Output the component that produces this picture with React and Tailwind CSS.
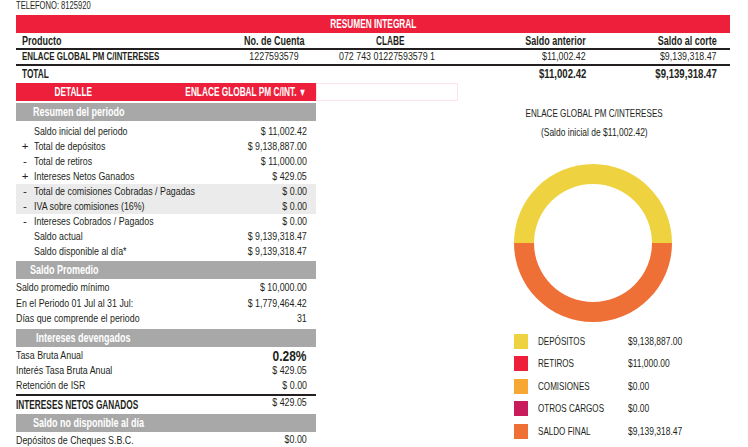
import React from "react";

// Narrow text: the statement uses a condensed face, squeeze the glyphs horizontally
const T = ({ children, o = "l", v = "n", className = "" }) => {
  const origin = o === "r" ? "origin-right" : o === "c" ? "origin-center" : "origin-left";
  const sx =
    v === "b" ? "scale-x-[0.75]" : v === "c" ? "scale-x-[0.69]" : v === "d" ? "scale-x-[0.8]" : "scale-x-[0.77]";
  return (
    <span className={`inline-block whitespace-nowrap ${sx} ${origin} ${className}`}>{children}</span>
  );
};

const resumen = [
  { sign: "", label: "Saldo inicial del periodo", value: "$ 11,002.42" },
  { sign: "+", label: "Total de depósitos", value: "$ 9,138,887.00" },
  { sign: "-", label: "Total de retiros", value: "$ 11,000.00" },
  { sign: "+", label: "Intereses Netos Ganados", value: "$ 429.05" },
  { sign: "-", label: "Total de comisiones Cobradas / Pagadas", value: "$ 0.00", shade: true },
  { sign: "-", label: "IVA sobre comisiones (16%)", value: "$ 0.00", shade: true },
  { sign: "-", label: "Intereses Cobrados / Pagados", value: "$ 0.00" },
  { sign: "", label: "Saldo actual", value: "$ 9,139,318.47" },
  { sign: "", label: "Saldo disponible al día*", value: "$ 9,139,318.47" },
];

const legend = [
  { color: "bg-[#efd240]", label: "DEPÓSITOS", value: "$9,138,887.00" },
  { color: "bg-[#ee1f3b]", label: "RETIROS", value: "$11,000.00" },
  { color: "bg-[#f7a833]", label: "COMISIONES", value: "$0.00" },
  { color: "bg-[#c81c5c]", label: "OTROS CARGOS", value: "$0.00" },
  { color: "bg-[#ef7036]", label: "SALDO FINAL", value: "$9,139,318.47" },
];

const GrayBar = ({ children, indent = "pl-[17px]" }) => (
  <div className={`h-[18px] bg-[#a8a8a8] text-white font-bold text-[12px] leading-[18px] ${indent}`}>
    <T v="b">{children}</T>
  </div>
);

const Row = ({ left, right, h = "h-[15.5px]" }) => (
  <div className={`flex ${h} items-center justify-between pr-[9px]`}>
    <T>{left}</T>
    <T o="r">{right}</T>
  </div>
);

const Donut = () => (
  <svg width="158" height="158" viewBox="0 0 158 158">
    <path d="M0 79 A79 79 0 0 1 158 79 L138 79 A59 59 0 0 0 20 79 Z" fill="#efd240" />
    <path d="M0 79 A79 79 0 0 0 158 79 L138 79 A59 59 0 0 1 20 79 Z" fill="#ef7036" />
  </svg>
);

export default function App() {
  return (
    <div
      className="w-[748px] h-[447px] overflow-hidden bg-white text-[#231f20] px-[16px] text-[11.5px] leading-none"
      style={{ fontFamily: '"Liberation Sans", Arial, sans-serif' }}
    >
      <div className="h-[11px] text-[11px] leading-[10px]">
        <T v="c">TELEFONO: 8125920</T>
      </div>

      {/* Resumen integral */}
      <div className="mt-[4px] w-[714px]">
        <div className="h-[18px] bg-[#ee1f3b] text-white font-bold text-[12px] leading-[18px] text-center">
          <T v="c" o="c">RESUMEN INTEGRAL</T>
        </div>
        <div className="flex h-[17px] items-center font-bold text-[12px] border-b-2 border-[#231f20]">
          <div className="w-[200px] pl-[6px]"><T v="b">Producto</T></div>
          <div className="w-[116px] text-center"><T v="b" o="c">No. de Cuenta</T></div>
          <div className="w-[60px] pl-[44px]"><T v="c">CLABE</T></div>
          <div className="flex-1 text-right pr-[14px]"><T v="b" o="r">Saldo anterior</T></div>
          <div className="w-[130px] text-right pr-[13px]"><T v="b" o="r">Saldo al corte</T></div>
        </div>
        <div className="flex h-[16px] items-center text-[11.5px] border-b-2 border-[#231f20]">
          <div className="w-[200px] pl-[6px] font-bold text-[11.5px]"><T v="c">ENLACE GLOBAL PM C/INTERESES</T></div>
          <div className="w-[116px] text-center"><T o="c">1227593579</T></div>
          <div className="w-[170px] pl-[7px]"><T>072 743 01227593579 1</T></div>
          <div className="flex-1 text-right pr-[14px]"><T o="r">$11,002.42</T></div>
          <div className="w-[130px] text-right pr-[13px]"><T o="r">$9,139,318.47</T></div>
        </div>
        <div className="flex h-[15px] items-center font-bold text-[12px]">
          <div className="w-[200px] pl-[6px]"><T v="c">TOTAL</T></div>
          <div className="flex-1 text-right pr-[14px]"><T v="d" o="r">$11,002.42</T></div>
          <div className="w-[130px] text-right pr-[13px]"><T v="d" o="r">$9,139,318.47</T></div>
        </div>
      </div>

      <div className="flex mt-[2px]">
        {/* Left detail column */}
        <div className="w-[300px]">
          <div className="flex h-[18px] bg-[#ee1f3b] text-white font-bold text-[12px] leading-[18px]">
            <div className="w-[156px] text-center"><T v="c" o="c">DETALLE</T></div>
            <div className="flex-1 text-right pr-[10px]">
              <T v="c" o="r">ENLACE GLOBAL PM C/INT. <span className="text-[11px]">▼</span></T>
            </div>
          </div>
          <div className="mt-[2px]">
            <GrayBar>Resumen del periodo</GrayBar>
          </div>
          <div className="pt-[3px]">
            {resumen.map((r) => (
              <div
                key={r.label}
                className={`flex h-[15px] items-center ${r.shade ? "bg-[#ebebeb]" : ""}`}
              >
                <div className="w-[18px] text-center">{r.sign}</div>
                <div className="flex-1"><T>{r.label}</T></div>
                <div className="pr-[9px]"><T o="r">{r.value}</T></div>
              </div>
            ))}
          </div>
          <div className="mt-[2px]">
            <GrayBar indent="pl-[14px]">Saldo Promedio</GrayBar>
          </div>
          <div className="pt-[1px]">
            <Row left="Saldo promedio mínimo" right="$ 10,000.00" />
            <Row left="En el Periodo 01 Jul al 31 Jul:" right="$ 1,779,464.42" />
            <Row left="Días que comprende el periodo" right="31" />
          </div>
          <div className="mt-[2px]">
            <GrayBar indent="pl-[20px]">Intereses devengados</GrayBar>
          </div>
          <div className="pt-[1px]">
            <div className="flex h-[16px] items-center justify-between pr-[9px]">
              <T>Tasa Bruta Anual</T>
              <T v="d" o="r" className="font-bold text-[15px]">0.28%</T>
            </div>
            <Row left="Interés Tasa Bruta Anual" right="$ 429.05" h="h-[15px]" />
            <div className="border-b-2 border-[#231f20]">
              <Row left="Retención de ISR" right="$ 0.00" h="h-[15px]" />
            </div>
            <div className="flex h-[17px] items-center justify-between pr-[9px]">
              <T v="c" className="font-bold text-[12px] pt-[1px]">INTERESES NETOS GANADOS</T>
              <T o="r" className="-mt-[2px]">$ 429.05</T>
            </div>
          </div>
          <div className="mt-[1px]">
            <GrayBar indent="pl-[17px]">Saldo no disponible al día</GrayBar>
          </div>
          <div className="flex h-[17px] items-center justify-between pr-[9px]">
            <T className="pt-[1px]">Depósitos de Cheques S.B.C.</T>
            <T o="r">$0.00</T>
          </div>
        </div>

        {/* Right chart column */}
        <div className="flex-1">
          <div className="w-[142px] h-[18px] border border-[#fde4e8]" />
          <div className="flex flex-col items-center w-[180px] ml-[188px] pt-[7px]">
            <div className="text-[10.5px]"><T o="c">ENLACE GLOBAL PM C/INTERESES</T></div>
            <div className="text-[11px] mt-[8px]"><T o="c">(Saldo inicial de $11,002.42)</T></div>
            <div className="mt-[26px] -ml-[2px]">
              <Donut />
            </div>
          </div>
          <div className="ml-[198px] mt-[12px] flex flex-col gap-[7.5px]">
            {legend.map((l) => (
              <div key={l.label} className="flex items-center h-[15px]">
                <div className={`w-[14px] h-[15px] ${l.color}`} />
                <div className="w-[100px] pl-[10px] text-[10.5px]"><T>{l.label}</T></div>
                <div className="text-[11px]"><T>{l.value}</T></div>
              </div>
            ))}
          </div>
        </div>
      </div>
    </div>
  );
}
